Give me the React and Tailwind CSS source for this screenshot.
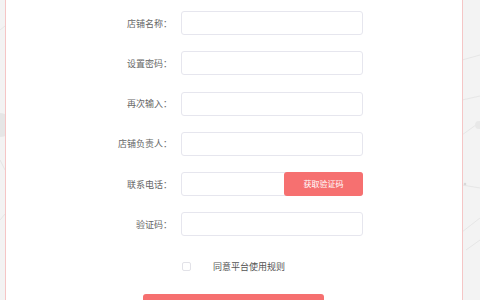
import React from "react";

const rows = ["店铺名称：", "设置密码：", "再次输入：", "店铺负责人：", "联系电话：", "验证码："];

export default function App() {
  return (
    <div
      className="relative w-[480px] h-[300px] overflow-hidden bg-[#f3f3f3]"
      style={{ fontFamily: '"Noto Sans CJK SC", "Noto Sans", sans-serif' }}
    >
      <svg className="absolute inset-0" width="480" height="300" viewBox="0 0 480 300">
        <g stroke="#e2e2e2" strokeWidth="0.8" fill="none">
          <line x1="462" y1="60" x2="480" y2="55" />
          <line x1="462" y1="100" x2="480" y2="96" />
          <line x1="462" y1="135" x2="480" y2="122" />
          <line x1="462" y1="185" x2="480" y2="188" />
          <line x1="462" y1="232" x2="480" y2="218" />
          <line x1="466" y1="250" x2="480" y2="240" />
          <line x1="0" y1="30" x2="5" y2="26" />
          <line x1="0" y1="160" x2="5" y2="170" />
          <line x1="0" y1="220" x2="5" y2="214" />
        </g>
        <circle cx="0" cy="125" r="12" fill="#e6e6e6" />
        <circle cx="465" cy="184" r="1.3" fill="#d8d8d8" />
        <circle cx="479" cy="125" r="4" fill="#e8e8e8" />
      </svg>
      <div className="relative ml-[5px] w-[458px] h-[300px] bg-white border-x border-[#f5c6c6] pt-[11px] flex flex-col">
        <div className="flex flex-col gap-[16.25px]">
          {rows.map((label, i) => (
            <div key={label} className="flex items-center h-[24px]">
              <div className="w-[166px] text-right text-[9px] leading-none text-[#666]">{label}</div>
              <div className="ml-[9px] w-[182px] h-[24px] flex border border-[#e6e6ee] rounded-[3px] bg-white">
                {i === 4 && (
                  <div className="ml-auto -my-px -mr-px w-[79px] h-[24px] bg-[#f67070] rounded-[3px] flex items-center justify-center text-[8px] leading-none text-white">
                    获取验证码
                  </div>
                )}
              </div>
            </div>
          ))}
        </div>
        <div className="flex items-center mt-[25px] h-[10px] shrink-0">
          <div className="ml-[176px] w-[9px] h-[9px] border border-[#e2e2e8] rounded-[2px] bg-white" />
          <div className="ml-[22px] text-[9px] leading-none text-[#555]">同意平台使用规则</div>
        </div>
        <div className="ml-[137px] mt-[23px] w-[181px] h-[20px] shrink-0 bg-[#f67070] rounded-[3px]" />
      </div>
    </div>
  );
}
